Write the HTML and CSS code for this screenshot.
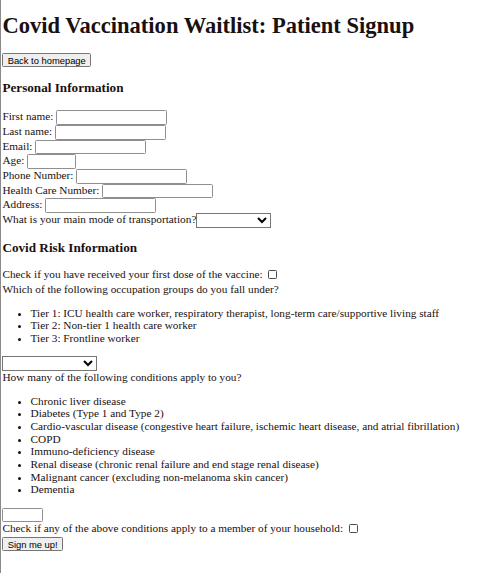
FILE: index.html
```html
<!DOCTYPE html>
<html lang="en">
<head>
<meta charset="utf-8">
<title>Covid Vaccination Waitlist: Patient Signup</title>
<link rel="stylesheet" href="styles.css">
</head>
<body>
<div class="page">
  <h1>Covid Vaccination Waitlist: Patient Signup</h1>
  <button class="btn" type="button">Back to homepage</button>
  <form>
    <h3>Personal Information</h3>
    <label>First name: <input class="field" type="text"></label><br>
    <label>Last name: <input class="field" type="text"></label><br>
    <label>Email: <input class="field" type="email"></label><br>
    <label>Age: <input class="field age" type="text"></label><br>
    <label>Phone Number: <input class="field" type="text"></label><br>
    <label>Health Care Number: <input class="field" type="text"></label><br>
    <label>Address: <input class="field" type="text"></label><br>
    <label>What is your main mode of transportation?<select class="sel sel-transport"><option></option></select></label>
    <h3 class="h-risk">Covid Risk Information</h3>
    <label>Check if you have received your first dose of the vaccine: <input class="check" type="checkbox"></label><br>
    Which of the following occupation groups do you fall under?
    <ul>
      <li>Tier 1: ICU health care worker, respiratory therapist, long-term care/supportive living staff</li>
      <li>Tier 2: Non-tier 1 health care worker</li>
      <li>Tier 3: Frontline worker</li>
    </ul>
    <select class="sel sel-tier"><option></option></select><br>
    How many of the following conditions apply to you?
    <ul>
      <li>Chronic liver disease</li>
      <li>Diabetes (Type 1 and Type 2)</li>
      <li>Cardio-vascular disease (congestive heart failure, ischemic heart disease, and atrial fibrillation)</li>
      <li>COPD</li>
      <li>Immuno-deficiency disease</li>
      <li>Renal disease (chronic renal failure and end stage renal disease)</li>
      <li>Malignant cancer (excluding non-melanoma skin cancer)</li>
      <li>Dementia</li>
    </ul>
    <input class="field count" type="text"><br>
    <label>Check if any of the above conditions apply to a member of your household: <input class="check" type="checkbox"></label><br>
    <button class="btn" type="submit">Sign me up!</button>
  </form>
</div>
</body>
</html>
```
FILE: styles.css
```css
html {
  border-left: 1px solid #8a8a8a;
  min-height: 100%;
  box-sizing: border-box;
}
body {
  margin: 0;
  font-family: "Liberation Serif", "Times New Roman", serif;
  color: #1a1010;
}
.page {
  zoom: 0.705;
  padding-left: 2px;
  line-height: 18px;
}
h1 {
  font-size: 32px;
  line-height: 37px;
  margin: 18px 0 20px;
}
h3 {
  font-size: 18.7px;
  line-height: 22px;
  margin: 18px 0 21px;
}
h3.h-risk {
  margin: 17px 0 18px;
}
.field {
  box-sizing: border-box;
  height: 20.6px;
  width: 157px;
  vertical-align: middle;
  border: 1px solid #8f8f8f;
  border-radius: 2px;
}
.field.age { width: 70px; }
.field.count { width: 58px; }
.sel {
  box-sizing: border-box;
  height: 21px;
  vertical-align: middle;
}
.sel-transport { width: 106px; }
.sel-tier { width: 134px; }
.check {
  appearance: none;
  box-sizing: border-box;
  width: 13px;
  height: 13px;
  margin: 3px 3px 5px 4px;
  border: 1px solid #4a4a4a;
  border-radius: 2px;
  background: #fff;
  vertical-align: middle;
}
.btn {
  font-family: "Liberation Sans", Arial, sans-serif;
  font-size: 13.33px;
}
ul { margin: 16px 0; }
```
